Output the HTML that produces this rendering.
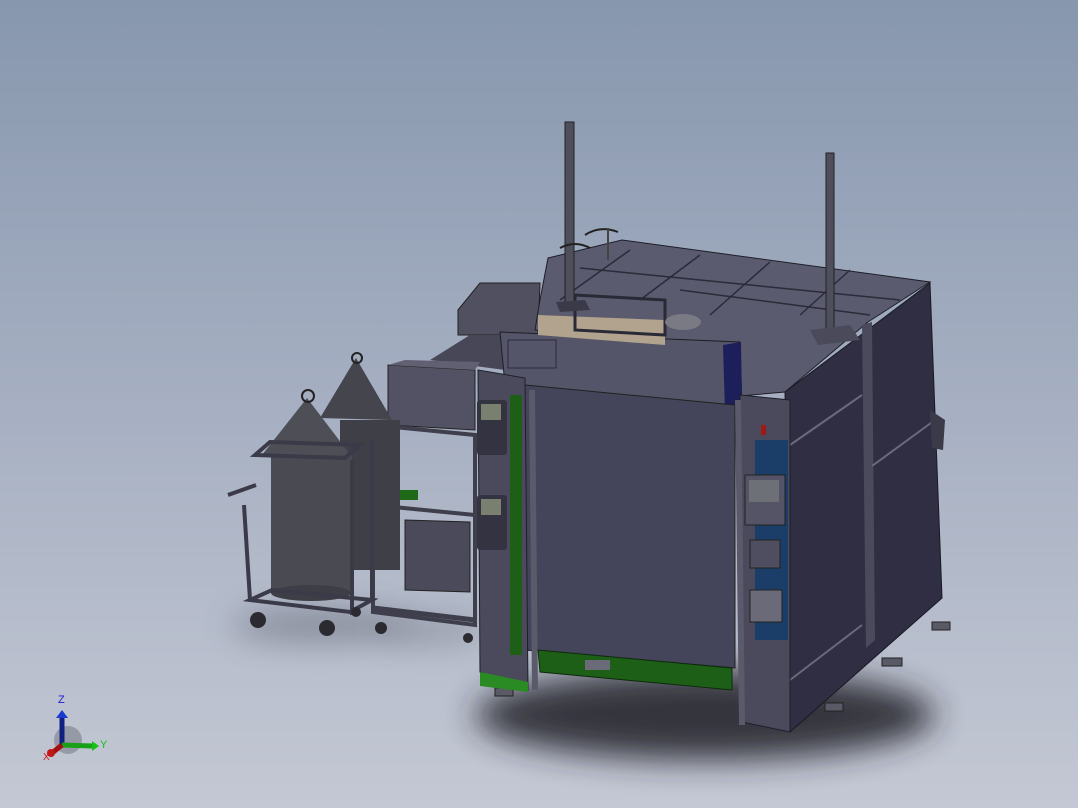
<!DOCTYPE html>
<html><head><style>
html,body{margin:0;padding:0;width:1078px;height:808px;overflow:hidden}
body{background:linear-gradient(180deg,#8797ae 0%,#a3adc0 45%,#c4c8d4 100%)}
svg{position:absolute;left:0;top:0}
</style></head><body>
<svg width="1078" height="808" viewBox="0 0 1078 808">
<defs>
<filter id="b" x="-100%" y="-300%" width="300%" height="700%"><feGaussianBlur stdDeviation="16"/></filter>
</defs>
<!-- shadows -->
<ellipse cx="705" cy="715" rx="230" ry="45" fill="#26262e" opacity="0.9" filter="url(#b)"/>
<ellipse cx="320" cy="625" rx="90" ry="16" fill="#4a4e5a" opacity="0.45" filter="url(#b)"/>
<ellipse cx="430" cy="630" rx="55" ry="12" fill="#4a4e5a" opacity="0.35" filter="url(#b)"/>

<!-- small box top -->
<polygon points="458,310 480,283 540,283 538,335 458,335" fill="#505060" stroke="#222"/>
<polygon points="430,360 470,335 540,335 505,370" fill="#474758"/>

<!-- top face of main box -->
<polygon points="548,258 622,240 930,282 868,322 785,392 740,396 740,345 535,330 540,300" fill="#5b5b70" stroke="#1e1e28" stroke-width="1"/>
<g stroke="#2a2a38" stroke-width="1.5" fill="none">
<line x1="630" y1="250" x2="560" y2="300"/><line x1="700" y1="255" x2="640" y2="300"/>
<line x1="770" y1="262" x2="710" y2="315"/><line x1="850" y1="270" x2="800" y2="315"/>
<line x1="580" y1="268" x2="900" y2="300"/><line x1="680" y1="290" x2="870" y2="315"/>
</g>
<!-- right side face -->
<polygon points="785,392 930,283 942,598 790,732" fill="#2f2e42" stroke="#1a1a24"/>
<polygon points="862,325 872,322 875,640 866,648" fill="#4a4a5c"/>
<g stroke="#6a6a7c" stroke-width="2"><line x1="790" y1="445" x2="862" y2="395"/><line x1="872" y1="466" x2="935" y2="420"/><line x1="790" y1="680" x2="862" y2="625"/></g>
<polygon points="930,410 945,420 943,450 932,448" fill="#3a3a48"/>
<!-- feet -->
<g fill="#5a5a66" stroke="#222"><rect x="932" y="622" width="18" height="8"/><rect x="882" y="658" width="20" height="8"/><rect x="825" y="703" width="18" height="8"/><rect x="768" y="716" width="20" height="8"/><rect x="495" y="688" width="18" height="8"/></g>

<!-- header box -->
<polygon points="500,332 740,342 742,410 505,385" fill="#55556a" stroke="#1e1e28"/>
<polygon points="723,345 741,342 742,408 725,412" fill="#1c1f5a"/>
<rect x="508" y="340" width="48" height="28" fill="none" stroke="#2a2a38"/>
<polygon points="538,315 665,320 665,345 538,335" fill="#b2a38e"/>
<polygon points="575,295 665,300 665,335 575,330" fill="none" stroke="#2a2a36" stroke-width="3"/>
<ellipse cx="683" cy="322" rx="18" ry="8" fill="#7a7a84"/>
<!-- front door -->
<polygon points="525,385 735,405 735,668 525,650" fill="#44445a" stroke="#222"/>
<!-- green base -->
<polygon points="538,650 732,668 732,690 540,672" fill="#1e5f18" stroke="#0d2a0c"/>
<rect x="585" y="660" width="25" height="10" fill="#6a6a78"/>
<!-- left column -->
<polygon points="478,370 525,378 528,690 480,672" fill="#4a4a5c" stroke="#1f1f2a"/>
<rect x="510" y="395" width="12" height="260" fill="#1e5f18"/>
<rect x="477" y="400" width="30" height="55" rx="3" fill="#333342"/>
<rect x="481" y="404" width="20" height="16" fill="#7a8070"/>
<rect x="477" y="495" width="30" height="55" rx="3" fill="#333342"/>
<rect x="481" y="499" width="20" height="16" fill="#7a8070"/>
<polygon points="480,672 528,682 528,692 480,686" fill="#2a8a24"/>
<line x1="532" y1="390" x2="535" y2="690" stroke="#5a5a6a" stroke-width="6"/>
<!-- right column -->
<polygon points="740,395 790,400 790,732 742,722" fill="#4a4a5c" stroke="#1f1f2a"/>
<rect x="755" y="440" width="33" height="200" fill="#1b3e68"/>
<rect x="745" y="475" width="40" height="50" fill="#545466" stroke="#222"/>
<rect x="749" y="480" width="30" height="22" fill="#6e7078"/>
<rect x="750" y="540" width="30" height="28" fill="#4e4e60" stroke="#222"/>
<rect x="750" y="590" width="32" height="32" fill="#6a6a78" stroke="#222"/>
<rect x="761" y="425" width="5" height="10" fill="#a01818"/>
<line x1="738" y1="400" x2="742" y2="725" stroke="#5a5a6a" stroke-width="6"/>
<!-- poles -->
<rect x="565" y="122" width="9" height="180" fill="#4e4e5c" stroke="#222"/>
<rect x="826" y="153" width="8" height="182" fill="#4e4e5c" stroke="#222"/>
<polygon points="556,302 585,300 590,310 560,312" fill="#3a3a48"/>
<polygon points="810,330 850,325 860,340 818,345" fill="#4a4a5a"/>
<path d="M585,235 Q600,225 618,232 M560,248 Q575,240 590,248" stroke="#222" fill="none" stroke-width="2"/>
<line x1="608" y1="228" x2="608" y2="260" stroke="#444" stroke-width="2"/>

<!-- middle cart -->
<polygon points="388,365 475,370 475,430 388,425" fill="#525264" stroke="#222"/>
<polygon points="388,365 405,360 480,362 475,370" fill="#606072"/>
<polygon points="405,520 470,522 470,592 405,590" fill="#4a4a5a" stroke="#222"/>
<polygon points="373,425 475,435 475,625 373,612" fill="none" stroke="#3e3e4c" stroke-width="4"/>
<line x1="373" y1="505" x2="475" y2="515" stroke="#3e3e4c" stroke-width="4"/>
<line x1="373" y1="608" x2="475" y2="620" stroke="#3e3e4c" stroke-width="5"/>
<rect x="378" y="490" width="40" height="10" fill="#1e6a18"/>
<circle cx="381" cy="628" r="6" fill="#2a2a30"/><circle cx="468" cy="638" r="5" fill="#2a2a30"/>
<!-- back cone -->
<polygon points="356,358 320,418 392,420" fill="#45454e"/>
<rect x="340" y="420" width="60" height="150" fill="#3f3f48"/>
<circle cx="357" cy="358" r="5" fill="none" stroke="#222" stroke-width="2"/>
<!-- front cone + cylinder -->
<polygon points="307,398 262,455 352,457" fill="#4e4e56"/>
<rect x="271" y="455" width="81" height="138" fill="#4a4a52"/>
<ellipse cx="311" cy="593" rx="40" ry="8" fill="#3e3e46"/>
<circle cx="308" cy="396" r="6" fill="none" stroke="#222" stroke-width="2"/>
<!-- front cart frame -->
<g stroke="#3a3a48" stroke-width="4" fill="none">
<polygon points="255,455 345,458 360,445 270,442"/>
<line x1="244" y1="505" x2="250" y2="600"/><line x1="228" y1="495" x2="256" y2="485"/>
<polygon points="250,600 350,612 372,600 272,590"/>
<line x1="352" y1="460" x2="352" y2="615"/><line x1="372" y1="440" x2="372" y2="600"/>
</g>
<circle cx="258" cy="620" r="8" fill="#2a2a30"/><circle cx="327" cy="628" r="8" fill="#2a2a30"/>
<circle cx="356" cy="612" r="5" fill="#2a2a30"/>

<!-- triad -->
<circle cx="68" cy="740" r="14" fill="#7a7e88" opacity="0.6"/>
<line x1="62" y1="745" x2="62" y2="716" stroke="#102080" stroke-width="5"/>
<polygon points="56,718 62,710 68,718" fill="#1a3ad0"/>
<line x1="62" y1="745" x2="92" y2="746" stroke="#18a018" stroke-width="5"/>
<polygon points="92,741 99,746 92,751" fill="#18c018"/>
<line x1="62" y1="745" x2="52" y2="753" stroke="#a01010" stroke-width="5"/>
<circle cx="51" cy="753" r="4" fill="#c01818"/>
<text x="58" y="703" font-family="Liberation Sans,sans-serif" font-size="11" fill="#1a1ad0">Z</text>
<text x="100" y="748" font-family="Liberation Sans,sans-serif" font-size="11" fill="#18c018">Y</text>
<text x="43" y="760" font-family="Liberation Sans,sans-serif" font-size="10" fill="#d01818">X</text>
</svg>
</body></html>
